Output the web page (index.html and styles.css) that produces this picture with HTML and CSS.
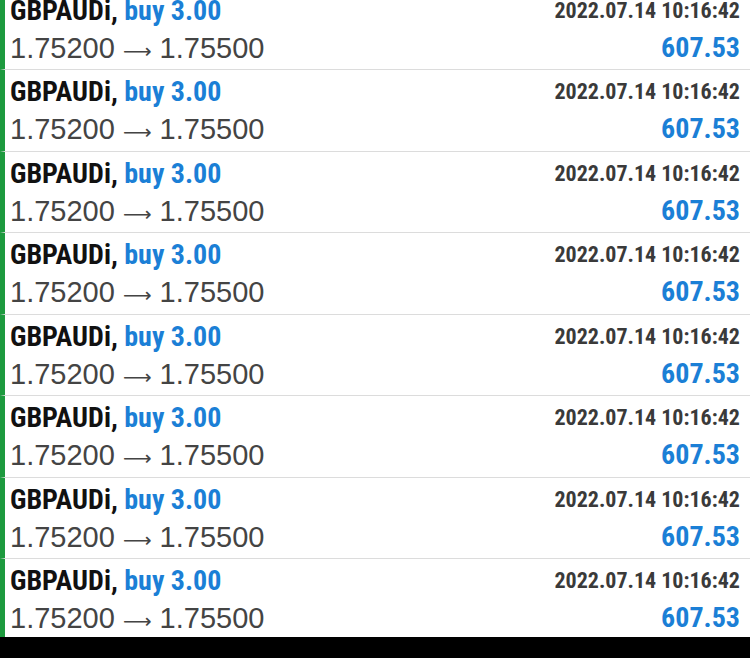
FILE: index.html
```html
<!DOCTYPE html>
<html lang="en">
<head>
<meta charset="utf-8">
<title>History</title>
<link rel="stylesheet" href="styles.css">
</head>
<body>
<div class="list">
  <div class="row"><div class="left"><div class="title"><span class="sym">GBPAUDi,</span> <span class="side">buy 3.00</span></div><div class="prices">1.75200 <span class="arrow">⟶</span> 1.75500</div></div><div class="right"><div class="date">2022.07.14 10:16:42</div><div class="profit">607.53</div></div></div>
  <div class="row"><div class="left"><div class="title"><span class="sym">GBPAUDi,</span> <span class="side">buy 3.00</span></div><div class="prices">1.75200 <span class="arrow">⟶</span> 1.75500</div></div><div class="right"><div class="date">2022.07.14 10:16:42</div><div class="profit">607.53</div></div></div>
  <div class="row"><div class="left"><div class="title"><span class="sym">GBPAUDi,</span> <span class="side">buy 3.00</span></div><div class="prices">1.75200 <span class="arrow">⟶</span> 1.75500</div></div><div class="right"><div class="date">2022.07.14 10:16:42</div><div class="profit">607.53</div></div></div>
  <div class="row"><div class="left"><div class="title"><span class="sym">GBPAUDi,</span> <span class="side">buy 3.00</span></div><div class="prices">1.75200 <span class="arrow">⟶</span> 1.75500</div></div><div class="right"><div class="date">2022.07.14 10:16:42</div><div class="profit">607.53</div></div></div>
  <div class="row"><div class="left"><div class="title"><span class="sym">GBPAUDi,</span> <span class="side">buy 3.00</span></div><div class="prices">1.75200 <span class="arrow">⟶</span> 1.75500</div></div><div class="right"><div class="date">2022.07.14 10:16:42</div><div class="profit">607.53</div></div></div>
  <div class="row"><div class="left"><div class="title"><span class="sym">GBPAUDi,</span> <span class="side">buy 3.00</span></div><div class="prices">1.75200 <span class="arrow">⟶</span> 1.75500</div></div><div class="right"><div class="date">2022.07.14 10:16:42</div><div class="profit">607.53</div></div></div>
  <div class="row"><div class="left"><div class="title"><span class="sym">GBPAUDi,</span> <span class="side">buy 3.00</span></div><div class="prices">1.75200 <span class="arrow">⟶</span> 1.75500</div></div><div class="right"><div class="date">2022.07.14 10:16:42</div><div class="profit">607.53</div></div></div>
  <div class="row"><div class="left"><div class="title"><span class="sym">GBPAUDi,</span> <span class="side">buy 3.00</span></div><div class="prices">1.75200 <span class="arrow">⟶</span> 1.75500</div></div><div class="right"><div class="date">2022.07.14 10:16:42</div><div class="profit">607.53</div></div></div>
</div>
<div class="bottom-bar"></div>
</body>
</html>
```
FILE: styles.css
```css
html, body {
  margin: 0;
  padding: 0;
  background: #ffffff;
  overflow: hidden;
  height: 658px;
}
body {
  display: flex;
  flex-direction: column;
}
.list {
  flex: 1;
  min-height: 0;
  overflow: hidden;
  display: flex;
  flex-direction: column;
}
.list > .row:first-child {
  margin-top: -11.5px;
}
.row {
  flex: none;
  height: 80.5px;
  box-sizing: content-box;
  border-left: 5px solid #1d9a3e;
  border-bottom: 1px solid #dcdcdc;
  display: flex;
  justify-content: space-between;
  padding: 0 10px 0 5px;
}
.left, .right {
  display: flex;
  flex-direction: column;
}
.right {
  align-items: flex-end;
}
.title {
  font-family: Roboto, "Liberation Sans", sans-serif;
  font-stretch: condensed;
  font-weight: bold;
  font-size: 28px;
  line-height: 28px;
  margin-top: 8px;
  color: #111111;
}
.side {
  color: #1b7fd6;
}
.prices {
  font-family: "Liberation Sans", Arial, sans-serif;
  font-size: 29px;
  line-height: 29px;
  margin-top: 9px;
  color: #444444;
}
.arrow {
  font-family: "DejaVu Sans", sans-serif;
  font-size: 20px;
}
.date {
  font-family: Roboto, "Liberation Sans", sans-serif;
  font-stretch: condensed;
  font-weight: bold;
  font-size: 22px;
  line-height: 22px;
  margin-top: 11px;
  color: #3a3a3a;
}
.profit {
  font-family: Roboto, "Liberation Sans", sans-serif;
  font-stretch: condensed;
  font-weight: bold;
  font-size: 28px;
  line-height: 28px;
  margin-top: 12px;
  color: #1b7fd6;
}
.bottom-bar {
  flex: none;
  height: 21px;
  background: #000000;
}
```
